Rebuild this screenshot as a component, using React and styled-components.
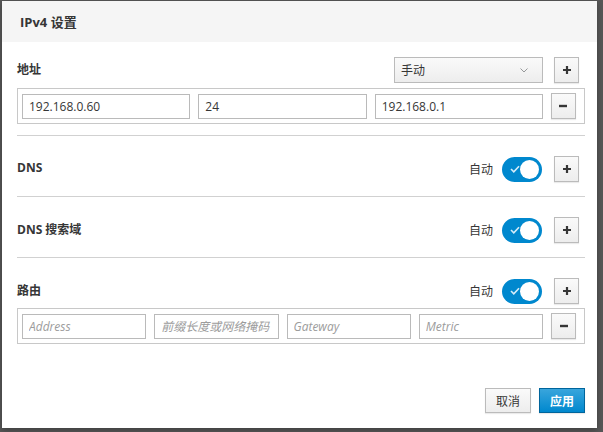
import React from "react";
import styled, { createGlobalStyle } from "styled-components";

const Global = createGlobalStyle`
  html, body { margin: 0; padding: 0; }
  body {
    background: #575757;
    width: 603px;
    height: 432px;
    overflow: hidden;
    font-family: "Open Sans", "Noto Sans CJK SC", sans-serif;
    color: #363636;
  }
  * { box-sizing: border-box; }
`;

const Modal = styled.div`
  margin: 1px 0 0 2px;
  width: 595px;
  height: 427px;
  background: #fff;
  display: flex;
  flex-direction: column;
  box-shadow: 0 2px 6px rgba(0,0,0,0.3);
`;

const Header = styled.div`
  height: 41px;
  background: #f5f5f5;
  display: flex;
  align-items: center;
  padding: 0 18px;
  font-size: 13px;
  font-weight: 700;
  color: #363636;
`;

const Body = styled.div`
  padding: 0 12px 0 15px;
`;

const Section = styled.div`
  padding: ${p => p.$top}px 0 ${p => p.$bottom}px;
  border-bottom: ${p => (p.$last ? "none" : "1px solid #d1d1d1")};
`;

const HeadRow = styled.div`
  display: flex;
  align-items: center;
  justify-content: space-between;
  height: 26px;
  padding-right: 6px;
`;

const Label = styled.div`
  font-size: 12px;
  font-weight: 700;
  color: #363636;
  margin-top: -3px;
`;

const Controls = styled.div`
  display: flex;
  align-items: center;
`;

const Select = styled.div`
  width: 149px;
  height: 26px;
  border: 1px solid #bbb;
  background: linear-gradient(#fafafa, #ededed);
  display: flex;
  align-items: center;
  justify-content: space-between;
  padding: 0 14px 0 6px;
  font-size: 12px;
  margin-right: 11px;
`;

const AutoText = styled.span`
  font-size: 12px;
  margin-right: 9px;
`;

const Toggle = styled.div`
  width: 40px;
  height: 25px;
  border-radius: 13px;
  background: #0088ce;
  position: relative;
  margin-right: 12px;
`;

const Knob = styled.div`
  position: absolute;
  right: 3px;
  top: 3px;
  width: 19px;
  height: 19px;
  border-radius: 50%;
  background: #fff;
`;

const Check = styled.svg`
  position: absolute;
  left: 8px;
  top: 8px;
`;

const IconButton = styled.button`
  width: 25px;
  height: 26px;
  padding: 0;
  border: 1px solid #bbb;
  background: linear-gradient(#fafafa, #ededed);
  box-shadow: 0 1px 1px rgba(3,3,3,0.08);
  display: flex;
  align-items: center;
  justify-content: center;
  flex: none;
`;

const Fields = styled.div`
  margin-top: ${p => p.$mt}px;
  border: 1px solid #c8c8c8;
  padding: 4px 8px 4px 4px;
  display: flex;
  align-items: center;
  gap: 8px;
`;

const Input = styled.input`
  flex: 1;
  min-width: 0;
  height: 25px;
  border: 1px solid #bababa;
  padding: 0 6px;
  font-family: "Open Sans", "Noto Sans CJK SC", sans-serif;
  font-size: 12px;
  color: #363636;
  outline: none;
  &::placeholder {
    color: #9c9c9c;
    font-style: italic;
  }
`;

const Footer = styled.div`
  margin-top: auto;
  display: flex;
  justify-content: flex-end;
  gap: 8px;
  padding: 0 12px 15px 0;
`;

const FooterButton = styled.button`
  width: 46px;
  height: 25px;
  padding: 0;
  font-family: "Open Sans", "Noto Sans CJK SC", sans-serif;
  font-size: 12px;
  border: 1px solid ${p => (p.$primary ? "#00659c" : "#bbb")};
  background: ${p =>
    p.$primary ? "linear-gradient(#39a5dc, #0088ce)" : "linear-gradient(#fafafa, #ededed)"};
  color: ${p => (p.$primary ? "#fff" : "#363636")};
  font-weight: ${p => (p.$primary ? 700 : 400)};
  box-shadow: 0 1px 1px rgba(3,3,3,0.08);
`;

const Plus = () => (
  <svg width="10" height="10" viewBox="0 0 10 10">
    <path d="M5 1v8M1 5h8" stroke="#363636" strokeWidth="2.2" />
  </svg>
);

const Minus = () => (
  <svg width="10" height="10" viewBox="0 0 10 10">
    <path d="M1 5h8" stroke="#363636" strokeWidth="2.4" />
  </svg>
);

const Chevron = () => (
  <svg width="8" height="5" viewBox="0 0 8 5">
    <path d="M0.5 0.5L4 4L7.5 0.5" stroke="#8b8d8f" strokeWidth="0.9" fill="none" />
  </svg>
);

const AutoSwitch = () => (
  <Controls>
    <AutoText>自动</AutoText>
    <Toggle>
      <Check width="10" height="8" viewBox="0 0 10 8">
        <path d="M1 4l2.8 2.8L9 1.2" stroke="#d6ecf8" strokeWidth="1.6" fill="none" />
      </Check>
      <Knob />
    </Toggle>
    <IconButton><Plus /></IconButton>
  </Controls>
);

export default function App() {
  return (
    <>
      <Global />
      <Modal>
        <Header>IPv4 设置</Header>
        <Body>
          <Section $top={15} $bottom={11}>
            <HeadRow>
              <Label>地址</Label>
              <Controls>
                <Select>
                  <span>手动</span>
                  <Chevron />
                </Select>
                <IconButton><Plus /></IconButton>
              </Controls>
            </HeadRow>
            <Fields $mt={5}>
              <Input defaultValue="192.168.0.60" />
              <Input defaultValue="24" />
              <Input defaultValue="192.168.0.1" />
              <IconButton><Minus /></IconButton>
            </Fields>
          </Section>
          <Section $top={20} $bottom={14}>
            <HeadRow>
              <Label>DNS</Label>
              <AutoSwitch />
            </HeadRow>
          </Section>
          <Section $top={20} $bottom={14}>
            <HeadRow>
              <Label>DNS 搜索域</Label>
              <AutoSwitch />
            </HeadRow>
          </Section>
          <Section $top={20} $bottom={0} $last>
            <HeadRow>
              <Label>路由</Label>
              <AutoSwitch />
            </HeadRow>
            <Fields $mt={4}>
              <Input placeholder="Address" />
              <Input placeholder="前缀长度或网络掩码" />
              <Input placeholder="Gateway" />
              <Input placeholder="Metric" />
              <IconButton><Minus /></IconButton>
            </Fields>
          </Section>
        </Body>
        <Footer>
          <FooterButton>取消</FooterButton>
          <FooterButton $primary>应用</FooterButton>
        </Footer>
      </Modal>
    </>
  );
}
